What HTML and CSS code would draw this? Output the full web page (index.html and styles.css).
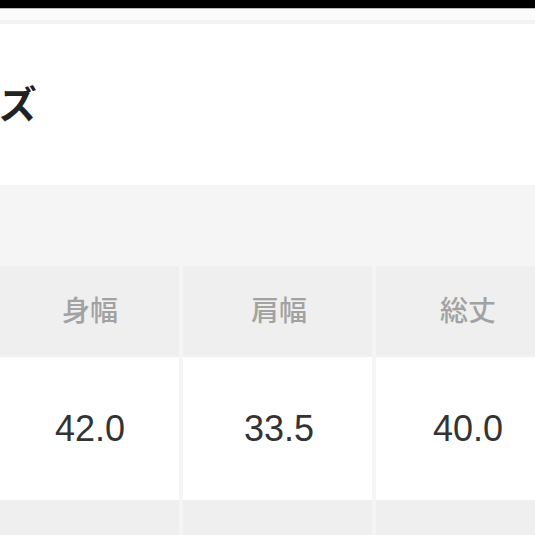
FILE: index.html
```html
<!DOCTYPE html>
<html lang="ja">
<head>
    <meta charset="UTF-8">
    <meta name="viewport" content="width=device-width, initial-scale=1.0">
    <title>サイズ</title>
    <link rel="stylesheet" href="styles.css">
</head>
<body>
    <div class="status-bar"></div>
    <div class="top-strip"></div>

    <!-- Title -->
    <section class="title-block">
        <h2 class="title">サイズ</h2>
    </section>

    <!-- Size table -->
    <section class="sizes">
        <div class="size-grid">
            <div class="cell head">身幅</div>
            <div class="cell head">肩幅</div>
            <div class="cell head">総丈</div>

            <div class="cell value">42.0</div>
            <div class="cell value">33.5</div>
            <div class="cell value">40.0</div>

            <div class="cell head"></div>
            <div class="cell head"></div>
            <div class="cell head"></div>
        </div>
    </section>
</body>
</html>
```

FILE: styles.css
```css
body {
    margin: 0;
    height: 535px;
    overflow: hidden;
    background: #ffffff;
    font-family: "Liberation Sans", "Noto Sans CJK JP", sans-serif;
}

.status-bar {
    height: 8px;
    background: #000;
}

.top-strip {
    height: 11px;
    background: #fbfbfb;
    border-top: 1px solid #b8b8b8;
    border-bottom: 4px solid #f3f3f3;
}

.title-block {
    height: 161px;
    display: flex;
    align-items: center;
    background: #fff;
}

.title {
    margin: 0 0 6px -76px;
    font-family: "Noto Sans CJK JP", sans-serif;
    font-size: 38px;
    font-weight: 700;
    color: #222;
}

.sizes {
    background: #f5f5f5;
    padding-top: 81px;
    height: 400px;
}

.size-grid {
    display: grid;
    grid-template-columns: repeat(3, 189px);
    grid-template-rows: 91px 143px 60px;
    gap: 0 4px;
    margin-left: -10px;
}

.cell {
    display: flex;
    align-items: center;
    justify-content: center;
}

/* text sits a little off-centre in the outer columns */
.cell:nth-child(3n+1) {
    padding-left: 11px;
}

.cell:nth-child(3n+2) {
    padding-left: 3px;
}

.cell:nth-child(3n) {
    padding-right: 5px;
}

.cell.head {
    background: #efefef;
    color: #a2a2a2;
    font-family: "Noto Sans CJK JP", sans-serif;
    font-size: 28px;
    font-weight: 500;
    padding-bottom: 5px;
}

.cell.value {
    background: #fff;
    color: #333;
    font-size: 36px;
}
```
